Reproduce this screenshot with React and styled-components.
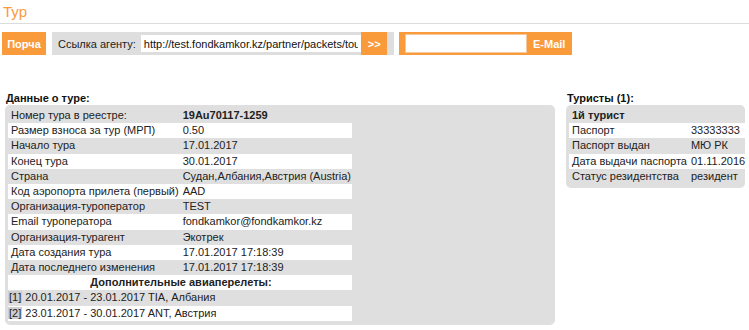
import * as React from 'react';
import styled, { createGlobalStyle } from 'styled-components';

const Global = createGlobalStyle`
    body {
        margin: 0;
        background: #fff;
        font-family: "Liberation Sans", Arial, sans-serif;
        font-size: 11px;
        color: #222;
    }
`;

const orange = '#f99a3b';

const tour = [
    ['Номер тура в реестре:', '19Au70117-1259', true],
    ['Размер взноса за тур (МРП)', '0.50'],
    ['Начало тура', '17.01.2017'],
    ['Конец тура', '30.01.2017'],
    ['Страна', 'Судан,Албания,Австрия (Austria)'],
    ['Код аэропорта прилета (первый)', 'AAD'],
    ['Организация-туроператор', 'TEST'],
    ['Email туроператора', 'fondkamkor@fondkamkor.kz'],
    ['Организация-турагент', 'Экотрек'],
    ['Дата создания тура', '17.01.2017 17:18:39'],
    ['Дата последнего изменения', '17.01.2017 17:18:39'],
];

const flights = [
    ['1', '20.01.2017 - 23.01.2017 TIA, Албания'],
    ['2', '23.01.2017 - 30.01.2017 ANT, Австрия'],
];

const tourist = [
    ['Паспорт', '33333333'],
    ['Паспорт выдан', 'МЮ РК'],
    ['Дата выдачи паспорта', '01.11.2016'],
    ['Статус резидентства', 'резидент'],
];

const App = () => {
    return (
        <Page>
            <Global />
            <Title>Тур</Title>
            <Toolbar>
                <OrangeButton>Порча</OrangeButton>
                <LinkBox>
                    <span>Ссылка агенту:</span>
                    <LinkInput readOnly value="http://test.fondkamkor.kz/partner/packets/tour/19Au70117-1259" />
                    <ArrowButton>&gt;&gt;</ArrowButton>
                </LinkBox>
                <MailBox>
                    <MailInput />
                    <span>E-Mail</span>
                </MailBox>
            </Toolbar>
            <Columns>
                <Column>
                    <Heading>Данные о туре:</Heading>
                    <Panel width="550px">
                        <Table>
                            <tbody>
                                {tour.map(([label, value, bold], i) => (
                                    <Row key={label} $white={i % 2 === 1}>
                                        <td>{label}</td>
                                        <Value $bold={bold}>{value}</Value>
                                    </Row>
                                ))}
                                <Row $white>
                                    <SubHead colSpan={2}>Дополнительные авиаперелеты:</SubHead>
                                </Row>
                                {flights.map(([n, text], i) => (
                                    <Row key={n} $white={i % 2 === 1}>
                                        <FlightCell colSpan={2}><Num>[{n}]</Num> {text}</FlightCell>
                                    </Row>
                                ))}
                            </tbody>
                        </Table>
                    </Panel>
                </Column>
                <Column>
                    <Heading>Туристы (1):</Heading>
                    <Panel width="179px">
                        <Table $full>
                            <tbody>
                                <Row>
                                    <SubHead colSpan={2} $left>1й турист</SubHead>
                                </Row>
                                {tourist.map(([label, value], i) => (
                                    <Row key={label} $white={i % 2 === 0}>
                                        <td>{label}</td>
                                        <Value>{value}</Value>
                                    </Row>
                                ))}
                            </tbody>
                        </Table>
                    </Panel>
                </Column>
            </Columns>
        </Page>
    )
}
export default App;

const Page = styled.div`
    width: 749px;
`

const Title = styled.h1`
    margin: 0;
    padding: 3px 3px 0;
    height: 20px;
    font-size: 15px;
    font-weight: normal;
    color: ${orange};
    border-bottom: 1px solid #dcdcdc;
`

const Toolbar = styled.div`
    display: flex;
    align-items: stretch;
    height: 23px;
    margin: 8px 0 0 2px;
`

const OrangeButton = styled.div`
    width: 44px;
    display: flex;
    align-items: center;
    justify-content: center;
    background: ${orange};
    color: #fff;
    font-weight: bold;
    font-size: 11px;
`

const LinkBox = styled.div`
    display: flex;
    align-items: center;
    width: 342px;
    margin-left: 6px;
    padding: 0 7px 0 6px;
    box-sizing: border-box;
    background: #dedede;
    color: #222;
    span {
        white-space: nowrap;
        margin-right: 5px;
    }
`

const LinkInput = styled.input`
    width: 224px;
    height: 17px;
    box-sizing: border-box;
    border: none;
    padding: 0 3px;
    font-family: "Liberation Sans", Arial, sans-serif;
    font-size: 11px;
    color: #111;
    background: #fff;
    outline: none;
`

const ArrowButton = styled.div`
    align-self: stretch;
    width: 26px;
    display: flex;
    align-items: center;
    justify-content: center;
    background: ${orange};
    color: #fff;
    font-weight: bold;
    font-size: 11px;
`

const MailBox = styled.div`
    display: flex;
    align-items: center;
    width: 173px;
    margin-left: 5px;
    padding: 0 6px;
    box-sizing: border-box;
    background: ${orange};
    span {
        margin-left: 6px;
        color: #fff;
        font-weight: bold;
        white-space: nowrap;
    }
`

const MailInput = styled.input`
    width: 122px;
    height: 19px;
    flex: none;
    box-sizing: border-box;
    border: 1px solid #f4c89a;
    background: #fff;
    outline: none;
`

const Columns = styled.div`
    display: flex;
    gap: 11px;
    margin: 37px 0 0 5px;
`

const Column = styled.div`
    display: flex;
    flex-direction: column;
`

const Heading = styled.div`
    font-weight: bold;
    font-size: 11px;
    line-height: 13px;
    margin: 0 0 0 1px;
    color: #111;
`

const Panel = styled.div`
    width: ${props => props.width};
    box-sizing: border-box;
    padding: 3px 4px 4px 3px;
    background: #dfdfdf;
    border-radius: 5px;
`

const Table = styled.table`
    border-collapse: collapse;
    width: ${props => props.$full ? '100%' : '338px'};
    font-size: 11px;
    td {
        padding: 0 1px 0 3px;
        line-height: 15.2px;
        white-space: nowrap;
    }
`

const Row = styled.tr`
    background: ${props => props.$white ? '#fff' : 'transparent'};
`

const Value = styled.td`
    font-weight: ${props => props.$bold ? 'bold' : 'normal'};
    width: 100%;
`

const SubHead = styled.td`
    font-weight: bold;
    text-align: ${props => props.$left ? 'left' : 'center'};
`

const FlightCell = styled.td`
    && { padding-left: 0; }
`

const Num = styled.span`
    background: #cfcfcf;
    padding: 0 1px;
`
